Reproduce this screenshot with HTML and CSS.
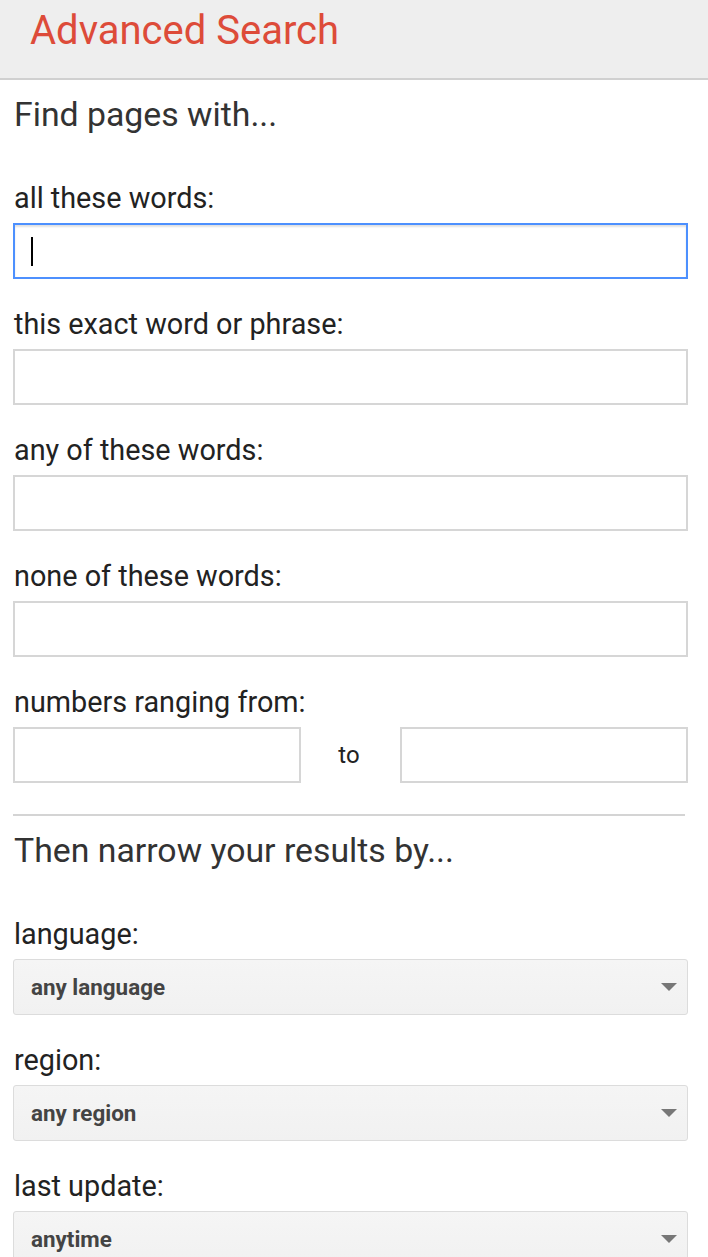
FILE: index.html
```html
<!DOCTYPE html>
<html>
<head>
<meta charset="utf-8">
<link rel="stylesheet" href="styles.css">
</head>
<body>
<header class="topbar">
  <h1 class="title">Advanced Search</h1>
</header>
<main class="content">
  <h2 class="section-title">Find pages with...</h2>
  <div class="field">
    <label class="label">all these words:</label>
    <div class="input focused"><span class="caret"></span></div>
  </div>
  <div class="field">
    <label class="label">this exact word or phrase:</label>
    <div class="input"></div>
  </div>
  <div class="field">
    <label class="label">any of these words:</label>
    <div class="input"></div>
  </div>
  <div class="field">
    <label class="label">none of these words:</label>
    <div class="input"></div>
  </div>
  <div class="field last">
    <label class="label">numbers ranging from:</label>
    <div class="range">
      <div class="input"></div>
      <span class="to">to</span>
      <div class="input"></div>
    </div>
  </div>
  <hr class="divider">
  <h2 class="section-title">Then narrow your results by...</h2>
  <div class="field">
    <label class="label">language:</label>
    <div class="select"><span class="select-text">any language</span><span class="arrow"></span></div>
  </div>
  <div class="field">
    <label class="label">region:</label>
    <div class="select"><span class="select-text">any region</span><span class="arrow"></span></div>
  </div>
  <div class="field">
    <label class="label">last update:</label>
    <div class="select"><span class="select-text">anytime</span><span class="arrow"></span></div>
  </div>
</main>
</body>
</html>
```
FILE: styles.css
```css
* { box-sizing: border-box; }
html, body { margin: 0; padding: 0; background: #fff; }
body {
  font-family: Roboto, "Liberation Sans", sans-serif;
  width: 708px;
  height: 1257px;
  overflow: hidden;
}
.topbar {
  background: #eeeeee;
  height: 80px;
  border-bottom: 2px solid #d0d0d0;
  padding: 7px 0 0 30px;
}
.title {
  margin: 0;
  font-size: 40px;
  line-height: 48px;
  font-weight: 400;
  color: #dd4b39;
}
.content {
  padding: 15px 20px 0 13px;
}
.section-title {
  margin: 0 0 46px 1px;
  font-size: 33.8px;
  line-height: 40px;
  font-weight: 400;
  color: #333;
}
.field {
  margin-bottom: 28px;
}
.field.last { margin-bottom: 31px; }
.label {
  display: block;
  margin: 0 0 8px 1px;
  font-size: 28.8px;
  line-height: 34px;
  color: #222;
}
.input {
  height: 56px;
  border: 2px solid #d6d6d6;
  background: #fff;
  position: relative;
}
.input.focused {
  border-color: #4d90fe;
  box-shadow: inset 0 2px 2px rgba(0,0,0,0.12);
}
.caret {
  position: absolute;
  left: 16px;
  top: 12px;
  width: 2px;
  height: 29px;
  background: #000;
}
.range {
  display: flex;
  align-items: center;
}
.range .input { width: 288px; }
.to {
  flex: 1;
  text-align: center;
  font-size: 24px;
  color: #222;
  padding-right: 3px;
}
.divider {
  margin: 0 3px 15px 0;
  border: 0;
  border-top: 2px solid #d4d4d4;
  height: 0;
}
.select {
  height: 56px;
  border: 1px solid #dcdcdc;
  border-radius: 3px;
  background: linear-gradient(#f5f5f5, #f1f1f1);
  display: flex;
  align-items: center;
  justify-content: space-between;
  padding: 0 10px 0 17px;
}
.select-text {
  font-size: 22.4px;
  font-weight: 700;
  color: #444;
}
.arrow {
  width: 0;
  height: 0;
  border-left: 8px solid transparent;
  border-right: 8px solid transparent;
  border-top: 8px solid #777;
}
```
